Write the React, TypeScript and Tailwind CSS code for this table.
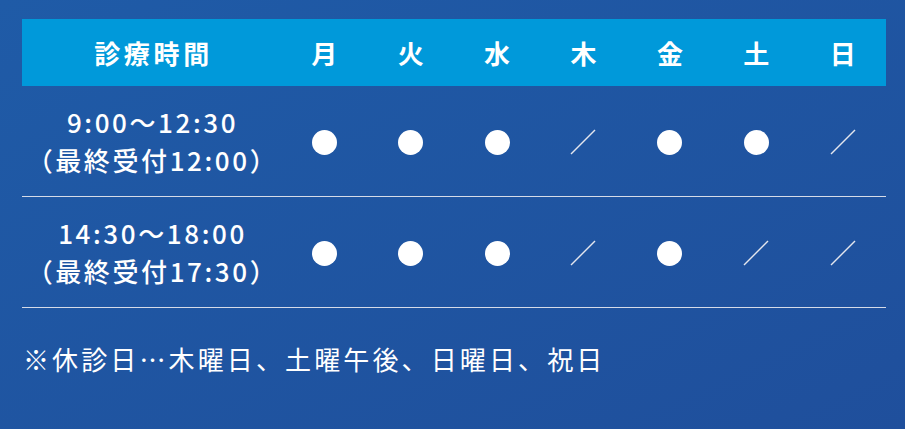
import React from 'react'

const days = ["月", "火", "水", "木", "金", "土", "日"]

const rows = [
  { time: "9:00〜12:30", last: "（最終受付12:00）", open: [true, true, true, false, true, true, false] },
  { time: "14:30〜18:00", last: "（最終受付17:30）", open: [true, true, true, false, true, false, false] },
]

const Mark: React.FC<{ on: boolean }> = ({ on }) =>
  on ? (
    <div className="w-[25px] h-[25px] rounded-full bg-white" />
  ) : (
    <svg width="26" height="26" viewBox="0 0 26 26">
      <line x1="1" y1="25" x2="25" y2="1" stroke="#e3e6ee" strokeWidth="1.4" />
    </svg>
  )

const App: React.FC = () => {
  return (
    <div
      className="w-[905px] h-[429px] overflow-hidden bg-gradient-to-br from-[#1f5ba7] to-[#1f4f9c] pt-[19px] pl-[22px] text-white"
      style={{ fontFamily: '"Noto Sans CJK JP", "Noto Sans", sans-serif' }}
    >
      <div className="w-[864px]">
        <div className="grid grid-cols-[259px_repeat(7,1fr)] h-[67px] items-center bg-[#0099da] font-bold text-[26px]">
          <div className="text-center tracking-[0.14em] pl-[4px]">診療時間</div>
          {days.map((d) => (
            <div key={d} className="text-center">{d}</div>
          ))}
        </div>

        {rows.map((r, i) => (
          <div key={i} className="grid grid-cols-[259px_repeat(7,1fr)] h-[111px] items-center border-b border-[#d5dbe8]">
            <div className="text-center text-[26px] font-medium leading-[38px] tracking-[0.1em] pl-[2px]">
              <div>{r.time}</div>
              <div>{r.last}</div>
            </div>
            {r.open.map((o, j) => (
              <div key={j} className="flex justify-center pt-[2px]">
                <Mark on={o} />
              </div>
            ))}
          </div>
        ))}

        <p className="mt-[34px] pl-[1px] text-[26px] tracking-[0.12em] leading-[34px]">
          ※休診日…木曜日、土曜午後、日曜日、祝日
        </p>
      </div>
    </div>
  )
}

export default App
